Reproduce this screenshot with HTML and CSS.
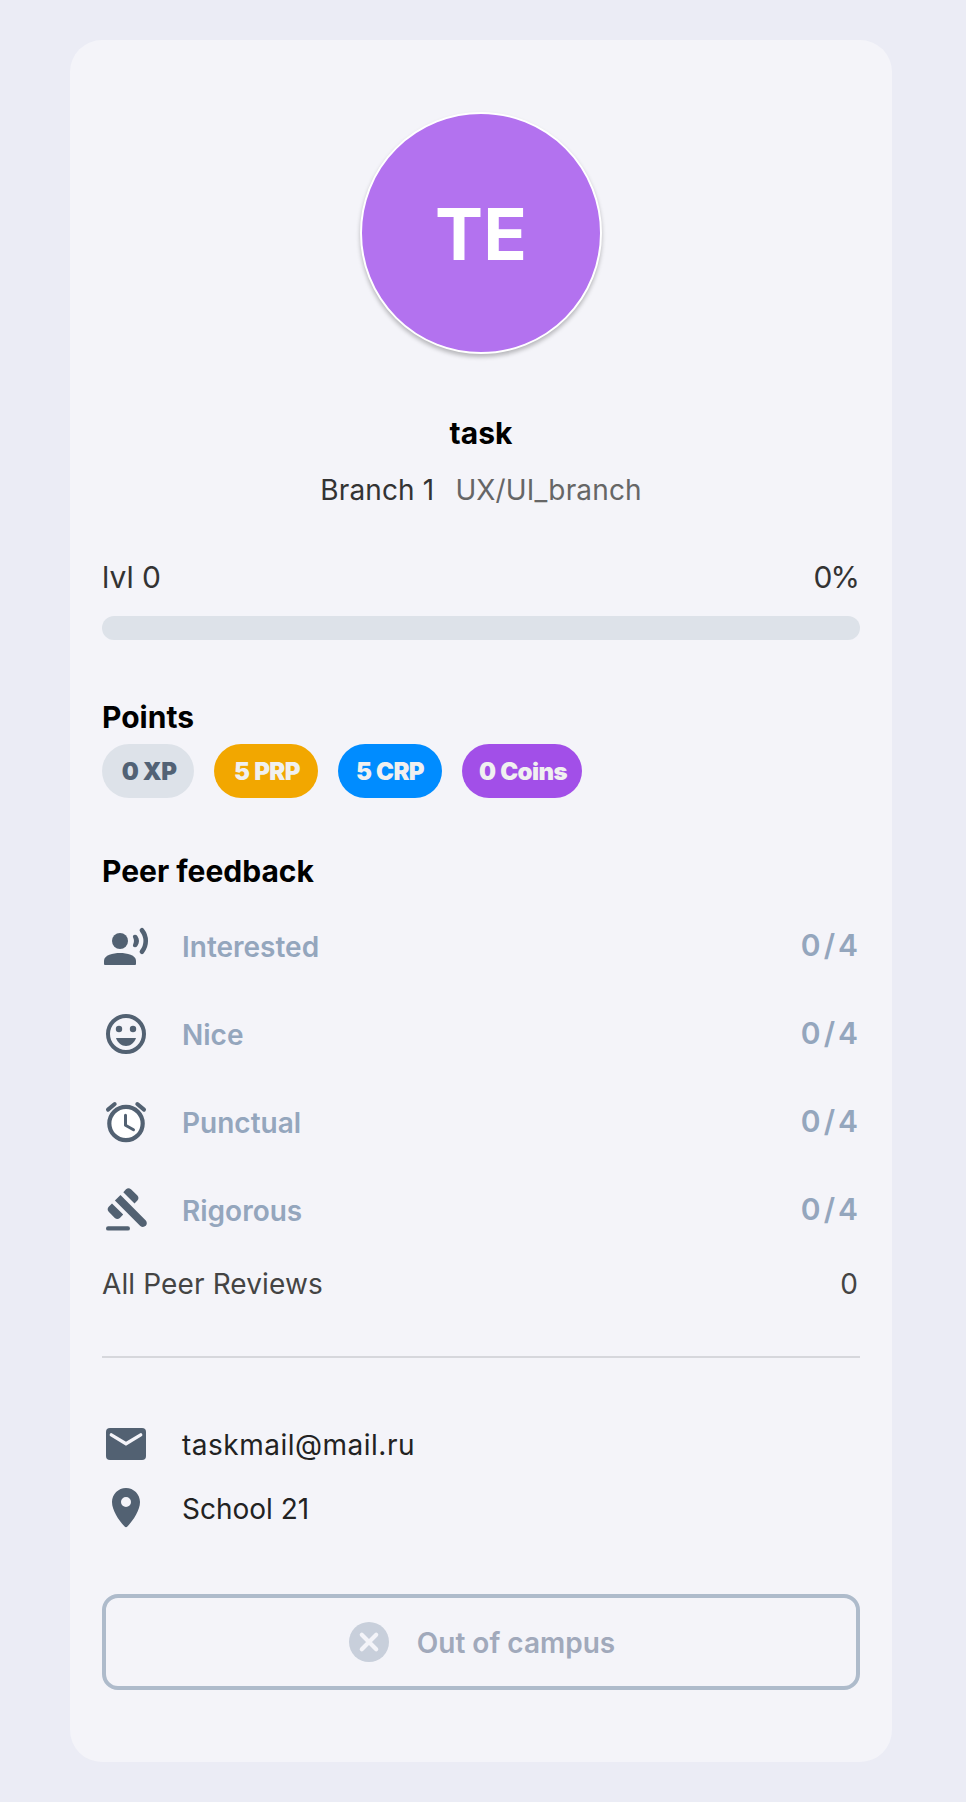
FILE: index.html
```html
<!DOCTYPE html>
<html lang="en">
<head>
<meta charset="utf-8">
<title>Profile</title>
<link rel="stylesheet" href="styles.css">
</head>
<body>
<main class="card">
  <div class="avatar">TE</div>
  <h1 class="name">task</h1>
  <p class="branch"><span>Branch 1</span><span class="track">UX/UI_branch</span></p>
  <div class="level"><span>lvl 0</span><span class="percent">0%</span></div>
  <div class="progress"></div>
  <h2 class="heading points-heading">Points</h2>
  <div class="chips">
    <span class="chip xp">0 XP</span>
    <span class="chip prp">5 PRP</span>
    <span class="chip crp">5 CRP</span>
    <span class="chip coins">0 Coins</span>
  </div>
  <h2 class="heading feedback-heading">Peer feedback</h2>
  <ul class="feedback">
    <li class="row">
      <svg class="icon" viewBox="0 0 48 48"><circle cx="18" cy="19" r="8"/><path d="M2 42v-3.200C2 33.200 11 31 18 31s16 2.200 16 7.800V42a1 1 0 0 1-1 1H3a1 1 0 0 1-1-1z"/><path d="M31.200 15.800C30.300 14 31.500 12.800 33 12.800c1 0 1.800.4 2.300 1.200 2.300 3.100 2.300 6.900 0 10-.5.8-1.300 1.200-2.300 1.200-1.500 0-2.700-1.200-1.800-3 1-2.100 1-4.300 0-6.400z"/><path class="line" stroke-width="4.600" d="M39.900 8.300c5.100 6.400 5.100 15 0 21.400"/></svg>
      <span class="label">Interested</span><span class="score">0/4</span>
    </li>
    <li class="row">
      <svg class="icon" viewBox="0 0 48 48"><circle class="line" cx="24" cy="24" r="18" stroke-width="4"/><circle cx="17" cy="19" r="3.200"/><circle cx="31" cy="19" r="3.200"/><path d="M14 28h20c-1.600 4.700-5.400 8-10 8s-8.400-3.300-10-8z"/></svg>
      <span class="label">Nice</span><span class="score">0/4</span>
    </li>
    <li class="row">
      <svg class="icon" viewBox="0 0 48 48"><circle class="line dial" cx="24" cy="25.500" r="16.700" stroke-width="4.200"/><path class="line" stroke-width="3" d="M23.500 17.300v9.900l8 4.500"/><path class="line" stroke-width="4" d="M6 11.600 12.700 6M35.300 6 42 11.600"/></svg>
      <span class="label">Punctual</span><span class="score">0/4</span>
    </li>
    <li class="row">
      <svg class="icon" viewBox="0 0 48 48"><path d="M10 17.600 21.200 28.600 17.900 31.900q-2.600 2-5.100 0L6.700 25.800q-2.100-2.500 0-5.100zM12.900 14.600 18.500 9 43.800 34.400q2 2.700 0 5.400-2.800 2.200-5.500.2zM21.300 6.200 24 3.300q2.400-2.100 5 0l6.400 6.200q2.100 2.500 0 5.100l-2.900 2.800z"/><rect x="4" y="40.200" width="24" height="4.400" rx="2.200"/></svg>
      <span class="label">Rigorous</span><span class="score">0/4</span>
    </li>
  </ul>
  <div class="reviews"><span>All Peer Reviews</span><span>0</span></div>
  <hr class="divider">
  <div class="contacts">
    <div class="contact">
      <svg class="icon" viewBox="0 0 48 48"><rect x="4" y="8" width="40" height="32" rx="4"/><path class="flap" d="m9.300 14.900 14.700 8.800 14.700-8.800"/></svg>
      <span class="email">taskmail@mail.ru</span>
    </div>
    <div class="contact">
      <svg class="icon" viewBox="0 0 48 48"><path fill-rule="evenodd" d="M24 4C16.300 4 10 10.300 10 18c0 8.500 7 18.500 12.600 24.600q1.400 1.300 2.800 0C31 36.500 38 26.500 38 18c0-7.700-6.300-14-14-14zm0 9a5 5 0 1 1 0 10 5 5 0 0 1 0-10z"/></svg>
      <span>School 21</span>
    </div>
  </div>
  <button class="status" type="button">
    <svg class="icon" viewBox="0 0 48 48"><circle class="badge" cx="24" cy="24" r="20"/><path class="cross" d="m16.800 16.800 14.400 14.400m0-14.400L16.800 31.200"/></svg>
    <span class="status-text">Out of campus</span>
  </button>
</main>
</body>
</html>
```
FILE: styles.css
```css
* { box-sizing: border-box; }
body {
  margin: 0;
  padding: 40px 74px 40px 70px;
  background: #ebecf5;
  font-family: Inter, "Liberation Sans", sans-serif;
  font-size: 28px;
  line-height: 34px;
}
h1, h2, p, ul { margin: 0; padding: 0; }
.card {
  display: flex;
  flex-direction: column;
  height: 1722px;
  padding: 72px 32px 0;
  border-radius: 32px;
  background: #f4f4f9;
}
.avatar {
  display: flex;
  align-items: center;
  justify-content: center;
  align-self: center;
  width: 242px;
  height: 242px;
  padding-top: 2px;
  border: 2px solid #fff;
  border-radius: 50%;
  background: #b372ef;
  box-shadow: 0 3px 4px rgba(0, 0, 0, .25);
  color: #fff;
  font-size: 72px;
  font-weight: 700;
}
.name, .heading {
  color: #000;
  font-size: 30px;
  font-weight: 700;
  line-height: 36px;
}
.name { margin-top: 61px; text-align: center; }
.branch {
  display: flex;
  justify-content: center;
  gap: 21px;
  margin-top: 22px;
  color: #333;
  letter-spacing: .15px;
}
.track { color: #666; }
.level {
  display: flex;
  justify-content: space-between;
  margin-top: 52px;
  color: #333;
  font-size: 30px;
  line-height: 36px;
}
.percent { padding-right: 2px; letter-spacing: -2px; }
.progress {
  height: 24px;
  margin-top: 21px;
  border-radius: 12px;
  background: #dde2e9;
}
.points-heading { margin-top: 59px; }
.chips { display: flex; gap: 20px; margin-top: 9px; }
.chip {
  height: 54px;
  padding-left: 2px;
  border-radius: 27px;
  color: #f0f0f0;
  font-size: 24px;
  font-weight: 900;
  line-height: 55px;
  letter-spacing: -.6px;
  word-spacing: .5px;
  text-align: center;
}
.xp { width: 92px; background: #dde2e9; color: #526275; }
.prp { width: 104px; background: #f2a700; }
.crp { width: 104px; padding-left: 0; background: #008cff; }
.coins { width: 120px; background: #a24fe8; }
.feedback-heading { margin-top: 55px; }
.feedback {
  display: flex;
  flex-direction: column;
  gap: 40px;
  margin-top: 33px;
  list-style: none;
}
.row, .contact { display: flex; align-items: center; height: 48px; gap: 32px; }
.icon { flex: none; width: 48px; height: 48px; fill: #526172; }
.line {
  fill: none;
  stroke: #526172;
  stroke-linecap: round;
  stroke-linejoin: round;
}
.dial { fill: #fff; }
.label, .score { color: #94a6bd; font-weight: 600; }
.label { padding-top: 2px; }
.score {
  margin: 0 -1px 0 auto;
  padding-bottom: 2px;
  font-size: 30px;
  letter-spacing: 3px;
}
.reviews {
  display: flex;
  justify-content: space-between;
  margin-top: 33px;
  padding-right: 2px;
  color: #444;
  letter-spacing: .12px;
}
.divider {
  width: 100%;
  height: 2px;
  margin: 55px 0 0;
  border: 0;
  background: #d6d7dc;
}
.contacts {
  display: flex;
  flex-direction: column;
  gap: 16px;
  margin-top: 62px;
  color: #222;
}
.contact span { padding-top: 2px; }
.email { letter-spacing: .5px; }
.flap, .cross {
  fill: none;
  stroke: #f4f4f9;
  stroke-width: 3.4;
  stroke-linecap: round;
}
.cross { stroke-width: 4.2; }
.badge { fill: #c8cfdb; }
.status {
  display: flex;
  align-items: center;
  justify-content: center;
  gap: 24px;
  height: 96px;
  margin-top: 62px;
  padding: 0 2px 0 0;
  border: 4px solid #aebbcb;
  border-radius: 16px;
  background: none;
  color: #a1a9bb;
  font: 600 28px/34px Inter, "Liberation Sans", sans-serif;
}
.status-text { padding-top: 2px; }
```
